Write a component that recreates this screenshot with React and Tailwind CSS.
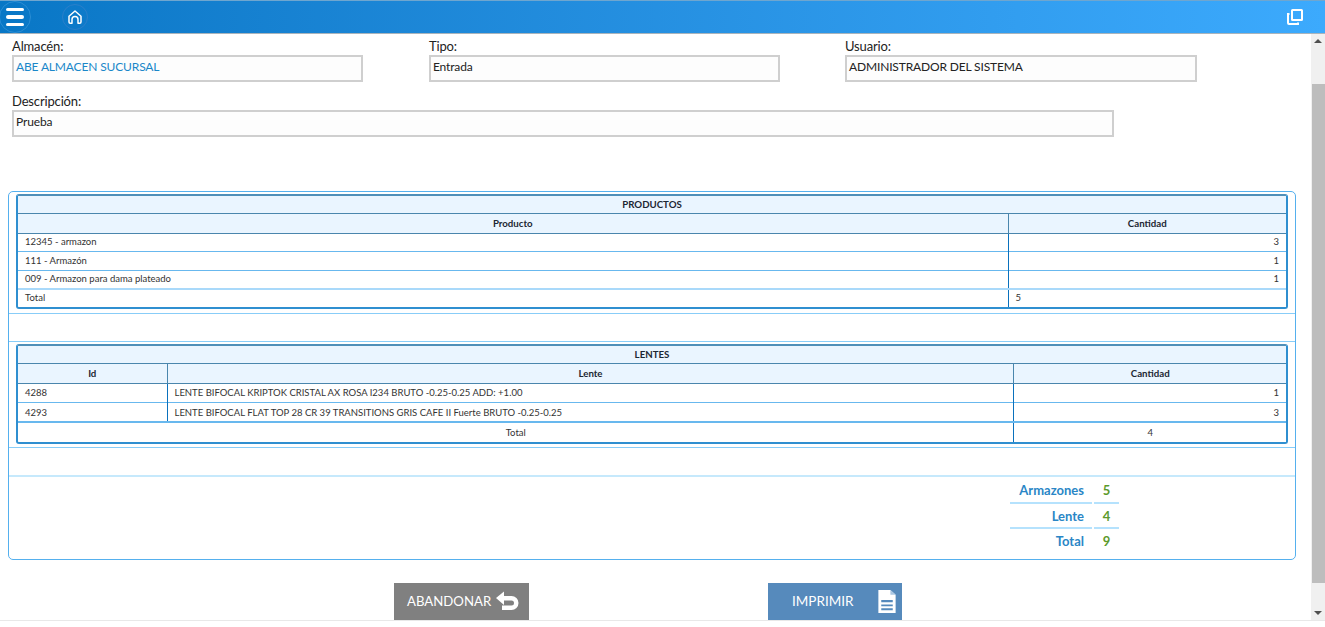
function Field({ label, value, blue, width }) {
  return (
    <div className={width}>
      <label className="block h-[16px] text-[13px] leading-[14px] tracking-[-0.15px] text-[#222]">{label}</label>
      <div className={`h-[27px] border-2 border-[#cfcfcf] bg-[#fdfdfd] pl-[2px] pt-[1px] text-[12px] leading-[17px] tracking-[-0.15px] ${blue ? "text-[#1a87c9]" : "text-[#222]"}`}>
        {value}
      </div>
    </div>
  );
}

function TableBox({ children, className }) {
  return (
    <div className={`mx-[7px] overflow-hidden rounded-[3px] border-2 border-l-[#2f8fd0] border-r-[#2f8fd0] border-t-[#4f8fb8] border-b-[#2f8fd0] ${className}`}>
      <table className="w-full table-fixed border-collapse text-[9.5px] text-[#333]">{children}</table>
    </div>
  );
}

const th = "h-[20px] bg-[#eaf5ff] border-b border-b-[#4a86ad] p-0 text-center text-[9.7px] font-bold text-[#1c2733]";
const title = "h-[17px] bg-[#eaf5ff] border-b border-b-[#4a86ad] p-0 text-center text-[9.7px] font-bold text-[#1c2733]";
const td = "h-[18.5px] p-0 px-[7px] border-t border-t-[#68b8ee] leading-[12px]";
const tdl = "h-[19.5px] p-0 px-[7px] pt-[1px] border-t border-t-[#68b8ee] leading-[12px]";

function Summary({ label, value, last, height }) {
  const line = last ? "" : "border-b-2 border-b-[#b5e2fd]";
  return (
    <div className={`flex gap-[2px] text-[13px] leading-[25px] font-bold ${height}`}>
      <div className={`w-[82px] pr-[8px] text-right text-[#2a86c6] ${line}`}>{label}</div>
      <div className={`w-[25px] text-center text-[#5c9a2c] ${line}`}>{value}</div>
    </div>
  );
}

export default function App() {
  return (
    <div className="flex h-[627px] flex-col overflow-hidden bg-white font-['Lato',sans-serif]">
      <header className="flex h-[34px] shrink-0 items-center justify-between border-t border-t-[#6fa6cf] border-b border-b-[#a9b4bc] bg-gradient-to-r from-[#0877c6] to-[#3caafd] pr-[22px]">
        <div className="flex items-center">
          <div className="ml-[-1px] flex h-[32px] w-[32px] flex-col items-center justify-center gap-[4px] rounded-full border border-[#2a8dd4] pr-[1px]">
            <span className="h-[3.5px] w-[18px] rounded-[2px] bg-white" />
            <span className="h-[3.5px] w-[18px] rounded-[2px] bg-white" />
            <span className="h-[3.5px] w-[18px] rounded-[2px] bg-white" />
          </div>
          <div className="ml-[31px] flex h-[26px] w-[26px] items-center justify-center rounded-full border border-[#2a7fc9]">
            <svg width="16" height="16" viewBox="0 0 16 16" fill="none" stroke="white" strokeWidth="1.5" strokeLinejoin="round" strokeLinecap="round">
              <path d="M2 7.2 8 2l6 5.2V13a1.2 1.2 0 0 1-1.2 1.2H11V10.5a3 3 0 0 0-6 0v3.7H3.2A1.2 1.2 0 0 1 2 13z" />
            </svg>
          </div>
        </div>
        <svg width="16" height="16" viewBox="0 0 16 16" fill="none" stroke="white" strokeWidth="2">
          <rect x="5" y="1" width="10" height="10" rx="0.5" />
          <path d="M2.5 5H1v9a1 1 0 0 0 1 1h9v-1.5" />
        </svg>
      </header>

      <div className="flex min-h-0 flex-1">
        <main className="min-w-0 flex-1 pt-[5px]">
          <div className="flex pl-[12px]">
            <Field label="Almacén:" value="ABE ALMACEN SUCURSAL" blue width="w-[351px]" />
            <Field label="Tipo:" value="Entrada" width="ml-[66px] w-[351px]" />
            <Field label="Usuario:" value="ADMINISTRADOR DEL SISTEMA" width="ml-[65px] w-[352px]" />
          </div>
          <div className="mt-[12px] pl-[12px]">
            <Field label="Descripción:" value="Prueba" width="w-[1102px]" />
          </div>

          <section className="ml-[8px] mr-[15px] mt-[54px] h-[369px] rounded-[5px] border border-[#55b0ee] pt-[2px]">
            <TableBox>
              <colgroup>
                <col />
                <col className="w-[278px]" />
              </colgroup>
              <thead>
                <tr>
                  <th colSpan={2} className={title}>PRODUCTOS</th>
                </tr>
                <tr>
                  <th className={th}>Producto</th>
                  <th className={`${th} border-l border-l-[#4a86ad]`}>Cantidad</th>
                </tr>
              </thead>
              <tbody>
                <tr>
                  <td className={td}>12345 - armazon</td>
                  <td className={`${td} border-l border-l-[#0a71bd] text-right`}>3</td>
                </tr>
                <tr>
                  <td className={td}>111 - Armazón</td>
                  <td className={`${td} border-l border-l-[#0a71bd] text-right`}>1</td>
                </tr>
                <tr>
                  <td className={td}>009 - Armazon para dama plateado</td>
                  <td className={`${td} border-l border-l-[#0a71bd] text-right`}>1</td>
                </tr>
                <tr>
                  <td className={`${td} border-t-2 border-t-[#a9d9fa]`}>Total</td>
                  <td className={`${td} border-t-2 border-t-[#a9d9fa] border-l border-l-[#0a71bd]`}>5</td>
                </tr>
              </tbody>
            </TableBox>

            <div className="mt-[4px] h-[29px] border-y border-[#88cdf8]" />

            <TableBox className="mt-[2px]">
              <colgroup>
                <col className="w-[149px]" />
                <col />
                <col className="w-[272px]" />
              </colgroup>
              <thead>
                <tr>
                  <th colSpan={3} className={title}>LENTES</th>
                </tr>
                <tr>
                  <th className={th}>Id</th>
                  <th className={`${th} border-l border-l-[#4a86ad]`}>Lente</th>
                  <th className={`${th} border-l border-l-[#4a86ad]`}>Cantidad</th>
                </tr>
              </thead>
              <tbody>
                <tr>
                  <td className={tdl}>4288</td>
                  <td className={`${tdl} border-l border-l-[#0a71bd]`}>LENTE BIFOCAL KRIPTOK CRISTAL AX ROSA I234 BRUTO -0.25-0.25 ADD: +1.00</td>
                  <td className={`${tdl} border-l border-l-[#0a71bd] text-right`}>1</td>
                </tr>
                <tr>
                  <td className={tdl}>4293</td>
                  <td className={`${tdl} border-l border-l-[#0a71bd]`}>LENTE BIFOCAL FLAT TOP 28 CR 39 TRANSITIONS GRIS CAFE II Fuerte BRUTO -0.25-0.25</td>
                  <td className={`${tdl} border-l border-l-[#0a71bd] text-right`}>3</td>
                </tr>
                <tr>
                  <td colSpan={2} className={`${tdl} border-t-2 border-t-[#7cc4f5] text-center`}>Total</td>
                  <td className={`${tdl} border-t-2 border-t-[#7cc4f5] border-l border-l-[#0a71bd] text-center`}>4</td>
                </tr>
              </tbody>
            </TableBox>

            <div className="mt-[3px] h-[30px] border-t border-[#88cdf8] border-b-2 border-b-[#c6e9fc]" />

            <div className="ml-[1001px] mt-[1px] w-[110px]">
              <Summary label="Armazones" value="5" height="h-[26px]" />
              <Summary label="Lente" value="4" height="h-[25px]" />
              <Summary label="Total" value="9" height="h-[25px]" last />
            </div>
          </section>

          <div className="mt-[23px] flex pl-[394px]">
            <button className="flex h-[37px] w-[135px] items-center bg-[#808080] pl-[13px] text-[13.2px] text-white">
              ABANDONAR
              <svg className="ml-[4px] mb-[2px]" width="24" height="20" viewBox="0 0 24 20">
                <path d="M9 0.5V5h7.5a6.500 6.500 0 0 1 0 14H7v-4.500h9.500a2.200 2.200 0 0 0 0-5H9v4.500L1 7z" fill="white" />
              </svg>
            </button>
            <button className="ml-[239px] flex h-[37px] w-[134px] items-center bg-[#568abc] pb-[1px] pl-[24px] text-[13.5px] text-white">
              IMPRIMIR
              <svg className="ml-[25px]" width="18" height="23" viewBox="0 0 18 24">
                <path d="M0 0h12.500L18 5v19H0z" fill="white" />
                <path d="M12.500 0 18 5h-5.500z" fill="#a9c6e2" />
                <path d="M3 10.500h12v2.200H3zM3 15h12v2H3zM3 19h12v2H3z" fill="#568abc" />
              </svg>
            </button>
          </div>
        </main>

        <aside className="flex h-[586px] w-[14px] shrink-0 flex-col bg-[#f0f0f0]">
          <div className="flex h-[14px] items-center justify-center">
            <div className="h-0 w-0 border-x-[4px] border-b-[4px] border-x-transparent border-b-[#505050]" />
          </div>
          <div className="mt-[36px] ml-[1px] h-[499px] bg-[#bdbdbd]" />
          <div className="mt-auto flex h-[14px] items-center justify-center">
            <div className="h-0 w-0 border-x-[4px] border-t-[4px] border-x-transparent border-t-[#505050]" />
          </div>
        </aside>
      </div>
      <div className="h-[7px] shrink-0 border-t border-[#e8e8e8] bg-white" />
    </div>
  );
}
